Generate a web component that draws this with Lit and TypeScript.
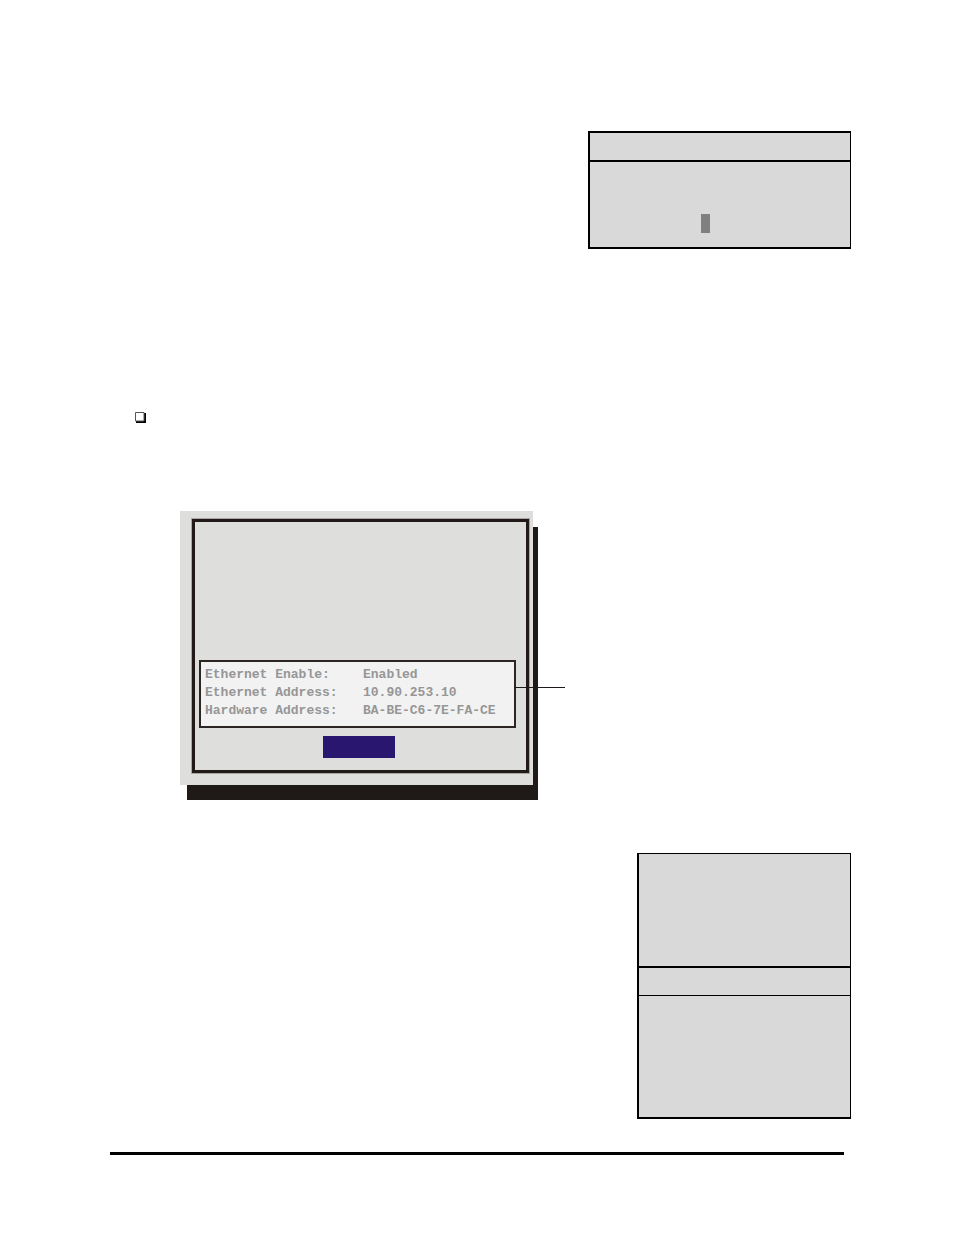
import { LitElement, html, css } from "lit";
import { customElement } from "lit/decorators.js";

interface Reading {
  label: string;
  value: string;
}

@customElement("app-root")
export class AppRoot extends LitElement {
  static styles = css`
    :host {
      display: block;
      background: #fff;
    }
    * {
      box-sizing: border-box;
    }
    .page {
      display: flex;
      flex-direction: column;
      align-items: flex-start;
      padding: 131px 103px 80px 110px;
    }
    .note {
      align-self: flex-end;
      background: #d9d9d9;
      border: 2px solid #000;
      border-right-width: 1px;
    }
    .prompt {
      width: 263px;
    }
    .prompt-title {
      height: 29px;
      border-bottom: 2px solid #000;
    }
    .prompt-body {
      height: 85px;
      padding: 52px 0 0 111px;
    }
    .cursor {
      width: 9px;
      height: 19px;
      background: #808080;
    }
    .bullet {
      display: block;
      margin: 162px 0 87px 24px;
    }
    .dialog {
      display: grid;
      width: 358px;
      margin-left: 70px;
    }
    .shadow,
    .panel {
      grid-area: 1 / 1;
    }
    .shadow {
      margin: 16px 0 0 7px;
      background: #1f1a17;
    }
    .panel {
      z-index: 1;
      margin: 0 5px 15px 0;
      padding: 8px 4px 12px 12px;
      background: #dededd;
    }
    .frame {
      display: flex;
      flex-direction: column;
      align-items: center;
      border: 3px solid #211a18;
      padding: 138px 8px 12px 4px;
      outline: 1px solid #a9a7a5;
    }
    .readings {
      position: relative;
      display: grid;
      grid-template-columns: 158px 1fr;
      align-self: stretch;
      height: 68px;
      margin: 0 2px 8px 0;
      padding: 4px 0 0 4px;
      border: 2px solid #2b2624;
      background: #f2f2f2;
      color: #969696;
      font: bold 13px/18px "Liberation Mono", monospace;
      align-content: start;
      white-space: nowrap;
    }
    .readings::after {
      content: "";
      position: absolute;
      left: 100%;
      top: 25px;
      width: 51px;
      height: 1px;
      background: #1f1a17;
    }
    .label,
    .value {
      margin: 0;
    }
    .action {
      width: 72px;
      height: 22px;
      padding: 0;
      border: 0;
      background: #28166f;
    }
    .menu {
      width: 214px;
      margin-top: 53px;
      border-top-width: 1px;
    }
    .menu-top {
      height: 114px;
      border-bottom: 2px solid #000;
    }
    .menu-title {
      height: 28px;
      border-bottom: 1px solid #000;
    }
    .menu-body {
      height: 121px;
    }
    .rule {
      align-self: stretch;
      height: 3px;
      margin: 33px 7px 0 0;
      border: 0;
      background: #000;
    }
  `;

  private readings: Reading[] = [
    { label: "Ethernet Enable:", value: "Enabled" },
    { label: "Ethernet Address:", value: "10.90.253.10" },
    { label: "Hardware Address:", value: "BA-BE-C6-7E-FA-CE" },
  ];

  render() {
    return html`
      <main class="page">
        <aside class="note prompt">
          <div class="prompt-title"></div>
          <div class="prompt-body"><div class="cursor"></div></div>
        </aside>

        <svg class="bullet" width="13" height="13" viewBox="0 0 13 13" aria-hidden="true">
          <path d="M2 2H12V12H2Z" fill="#000" />
          <path d="M1.5 1.5H10V10H1.5Z" fill="#fff" stroke="#555" stroke-width="1" />
        </svg>

        <section class="dialog">
          <div class="shadow"></div>
          <div class="panel">
            <div class="frame">
              <dl class="readings">
                ${this.readings.map(
                  (r) => html`<dt class="label">${r.label}</dt>
                    <dd class="value">${r.value}</dd>`
                )}
              </dl>
              <button class="action" type="button"></button>
            </div>
          </div>
        </section>

        <aside class="note menu">
          <div class="menu-top"></div>
          <div class="menu-title"></div>
          <div class="menu-body"></div>
        </aside>

        <hr class="rule" />
      </main>
    `;
  }
}
